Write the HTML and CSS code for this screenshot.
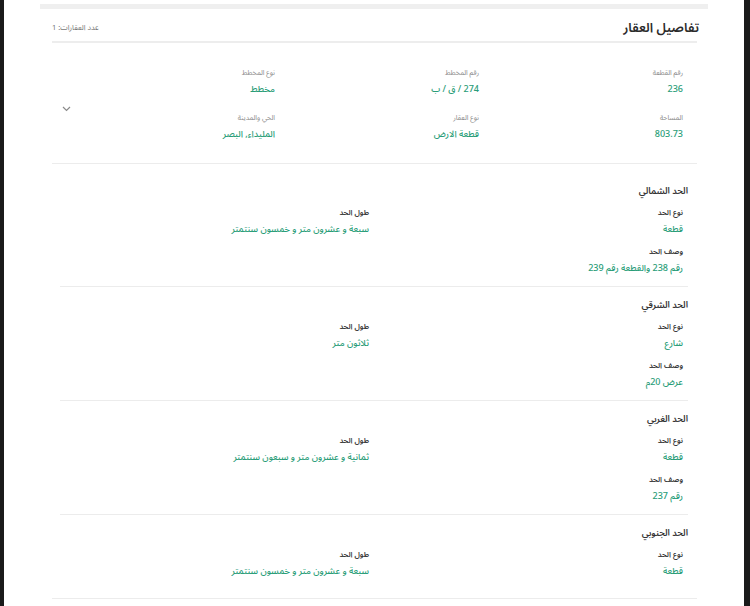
FILE: index.html
```html
<!DOCTYPE html>
<html lang="ar" dir="rtl">
<head>
    <meta charset="UTF-8">
    <title>تفاصيل العقار</title>
    <link rel="stylesheet" href="styles.css">
</head>
<body>
    <div class="frame">
        <div class="top-bar"></div>
        <div class="card">
            <div class="card-head">
                <h2 class="title">تفاصيل العقار</h2>
                <span class="count">عدد العقارات: 1</span>
            </div>

            <div class="summary">
                <div class="summary-grid">
                    <div class="field">
                        <div class="label">رقم القطعة</div>
                        <div class="value">236</div>
                    </div>
                    <div class="field">
                        <div class="label">رقم المخطط</div>
                        <div class="value">274 / ق / ب</div>
                    </div>
                    <div class="field">
                        <div class="label">نوع المخطط</div>
                        <div class="value">مخطط</div>
                    </div>
                    <div class="field">
                        <div class="label">المساحة</div>
                        <div class="value">803.73</div>
                    </div>
                    <div class="field">
                        <div class="label">نوع العقار</div>
                        <div class="value">قطعة الارض</div>
                    </div>
                    <div class="field">
                        <div class="label">الحي والمدينة</div>
                        <div class="value">المليداء, البصر</div>
                    </div>
                </div>
                <div class="toggle">
                    <svg width="9" height="6" viewBox="0 0 9 6"><polyline points="1,1 4.5,4.5 8,1" fill="none" stroke="#8a8a8a" stroke-width="1.2"/></svg>
                </div>
            </div>

            <div class="boundaries">
                <div class="boundary">
                    <h3 class="b-title">الحد الشمالي</h3>
                    <div class="b-grid">
                        <div class="b-col">
                            <div class="b-label">نوع الحد</div>
                            <div class="value">قطعة</div>
                            <div class="b-label">وصف الحد</div>
                            <div class="value">رقم 238 والقطعة رقم 239</div>
                        </div>
                        <div class="b-col">
                            <div class="b-label">طول الحد</div>
                            <div class="value">سبعة و عشرون متر و خمسون سنتمتر</div>
                        </div>
                    </div>
                </div>
                <div class="boundary">
                    <h3 class="b-title">الحد الشرقي</h3>
                    <div class="b-grid">
                        <div class="b-col">
                            <div class="b-label">نوع الحد</div>
                            <div class="value">شارع</div>
                            <div class="b-label">وصف الحد</div>
                            <div class="value">عرض 20م</div>
                        </div>
                        <div class="b-col">
                            <div class="b-label">طول الحد</div>
                            <div class="value">ثلاثون متر</div>
                        </div>
                    </div>
                </div>
                <div class="boundary">
                    <h3 class="b-title">الحد الغربي</h3>
                    <div class="b-grid">
                        <div class="b-col">
                            <div class="b-label">نوع الحد</div>
                            <div class="value">قطعة</div>
                            <div class="b-label">وصف الحد</div>
                            <div class="value">رقم 237</div>
                        </div>
                        <div class="b-col">
                            <div class="b-label">طول الحد</div>
                            <div class="value">ثمانية و عشرون متر و سبعون سنتمتر</div>
                        </div>
                    </div>
                </div>
                <div class="boundary last">
                    <h3 class="b-title">الحد الجنوبي</h3>
                    <div class="b-grid">
                        <div class="b-col">
                            <div class="b-label">نوع الحد</div>
                            <div class="value">قطعة</div>
                        </div>
                        <div class="b-col">
                            <div class="b-label">طول الحد</div>
                            <div class="value">سبعة و عشرون متر و خمسون سنتمتر</div>
                        </div>
                    </div>
                </div>
            </div>
        </div>
    </div>
</body>
</html>
```

FILE: styles.css
```css
* {
    padding: 0px;
    margin: 0px;
    box-sizing: border-box;
}
body {
    background-color: #1a1a1a;
    font-family: "Noto Sans Arabic", "DejaVu Sans", sans-serif;
    color: #333;
}
.frame {
    height: 606px;
    margin-right: 6px;
    margin-left: 4px;
    background-color: #fff;
    overflow: hidden;
}
.top-bar {
    height: 5px;
    margin: 4px 36px 0px 36px;
    background-color: #efefef;
}
.card {
    width: 645px;
    margin-right: 47px;
    border-bottom: 1px solid #ececec;
}
.card-head {
    display: flex;
    justify-content: space-between;
    align-items: center;
    height: 34px;
    padding-top: 5px;
    border-bottom: 2px solid #ededed;
}
.title {
    font-size: 13px;
    line-height: 18px;
    font-weight: 600;
    color: #2b2b2b;
    margin-right: -2px;
}
.count {
    font-size: 7.5px;
    line-height: 12px;
    color: #777;
}
.summary {
    display: flex;
    align-items: center;
    padding: 23px 0px 18px;
    border-bottom: 1px solid #ececec;
}
.summary-grid {
    display: grid;
    grid-template-columns: 204px 204px 204px;
    row-gap: 11px;
}
.field {
    padding-right: 14px;
}
.summary .label {
    font-size: 7px;
    line-height: 14px;
    color: #8a8a8a;
}
.value {
    font-size: 9px;
    line-height: 20px;
    font-weight: 500;
    color: #2a9d78;
}
.toggle {
    flex: 1;
    display: flex;
    justify-content: flex-end;
    padding-left: 10px;
    padding-top: 6px;
}
.boundaries {
    margin: 0px 9px 0px 8px;
    padding-top: 9px;
}
.boundary {
    padding: 11px 0px 7px;
    border-bottom: 1px solid #ececec;
}
.boundary.last {
    border-bottom: none;
    padding-bottom: 16px;
}
.b-title {
    font-size: 9px;
    line-height: 16px;
    font-weight: 600;
    color: #333;
}
.b-grid {
    display: grid;
    grid-template-columns: 1fr 1fr;
    margin-top: 6px;
}
.b-col {
    padding-right: 5px;
}
.b-label {
    font-size: 7.5px;
    line-height: 14px;
    font-weight: 600;
    color: #3a3a3a;
}
.b-col .value + .b-label {
    margin-top: 5px;
}
```
